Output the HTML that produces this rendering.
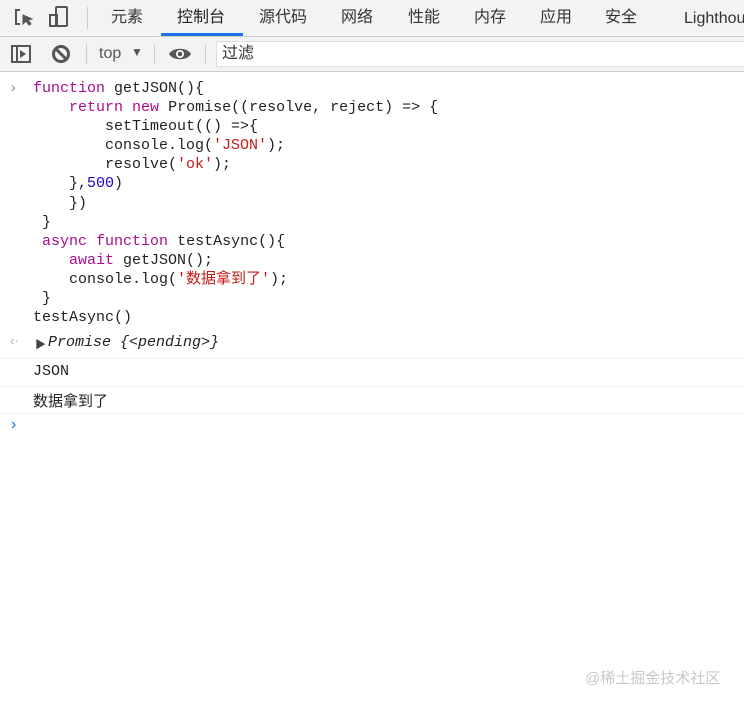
<!DOCTYPE html>
<html><head><meta charset="utf-8"><style>
body{margin:0;width:744px;height:706px;background:#fff;overflow:hidden;position:relative;font-family:"Liberation Sans","Noto Sans CJK SC",sans-serif;}
.tabs{position:absolute;left:0;top:0;width:744px;height:36px;background:#f1f3f4;border-bottom:1px solid #cbcdd1;overflow:hidden;}
.tab{position:absolute;top:7px;font-size:16px;line-height:22px;color:#333;white-space:nowrap;}
.ul{position:absolute;left:161px;top:33px;width:82px;height:3px;background:#1a73e8;}
.tb{position:absolute;left:0;top:37px;width:744px;height:34px;background:#f1f3f4;border-bottom:1px solid #cbcdd1;}
.sep{position:absolute;width:1px;background:#ccc;}
.filter{position:absolute;left:216px;top:41px;width:540px;height:26px;background:#fff;border:1px solid #ddd;box-sizing:border-box;font-size:16px;color:#333;padding-left:5px;line-height:24px;}
pre{margin:0;position:absolute;left:33px;top:79px;font-family:"Liberation Mono","Noto Sans CJK SC",monospace;font-size:15px;line-height:19.1px;color:#222;}
.k{color:#aa0d91}.s{color:#c41a16}.n{color:#1c00cf}
.row{position:absolute;left:0;width:744px;border-top:1px solid #eee;}
.mono{font-family:"Liberation Mono","Noto Sans CJK SC",monospace;font-size:15px;color:#222;position:absolute;}
</style></head><body>
<div class="tabs">
<svg style="position:absolute;left:13px;top:7px" width="22" height="22" viewBox="0 0 22 22" fill="none" stroke="#555" stroke-width="2"><path d="M7 3H3v14h4"/><path d="M10 8l9 4-4 1 3 4-2 1-3-4-3 3z" fill="#555" stroke-width="1"/></svg>
<svg style="position:absolute;left:48px;top:6px" width="22" height="22" viewBox="0 0 22 22" fill="none" stroke="#555" stroke-width="2"><rect x="8" y="1" width="11" height="19" rx="1"/><rect x="2" y="9" width="7" height="11"/></svg>
<div class="sep" style="left:87px;top:7px;height:22px"></div>
<span class="tab" style="left:111px">元素</span>
<span class="tab" style="left:177px;color:#222">控制台</span>
<span class="tab" style="left:259px">源代码</span>
<span class="tab" style="left:341px">网络</span>
<span class="tab" style="left:408px">性能</span>
<span class="tab" style="left:474px">内存</span>
<span class="tab" style="left:540px">应用</span>
<span class="tab" style="left:605px">安全</span>
<span class="tab" style="left:684px;top:8px">Lighthouse</span>
<div class="ul"></div>
</div>
<div class="tb">
<svg style="position:absolute;left:10px;top:7px" width="22" height="20" viewBox="0 0 22 20" fill="none" stroke="#555" stroke-width="2"><rect x="2" y="2" width="18" height="16"/><path d="M7 2v16"/><path d="M10 6l6 4-6 4z" fill="#555" stroke="none"/></svg>
<svg style="position:absolute;left:51px;top:7px" width="20" height="20" viewBox="0 0 20 20" fill="none" stroke="#555" stroke-width="3"><circle cx="10" cy="10" r="7.5"/><path d="M5 5l10 10"/></svg>
<div class="sep" style="left:86px;top:7px;height:20px"></div>
<span style="position:absolute;left:99px;top:8px;font-size:16px;color:#555">top</span>
<span style="position:absolute;left:131px;top:8px;font-size:12px;color:#555">▼</span>
<div class="sep" style="left:154px;top:7px;height:20px"></div>
<svg style="position:absolute;left:168px;top:9px" width="24" height="16" viewBox="0 0 24 16"><path d="M1 8C5 1 19 1 23 8C19 15 5 15 1 8z" fill="#555"/><circle cx="12" cy="8" r="4" fill="#fff"/><circle cx="12" cy="8" r="2.3" fill="#555"/></svg>
<div class="sep" style="left:205px;top:7px;height:20px"></div>
</div>
<div class="filter">过滤</div>
<span style="position:absolute;left:11px;top:79px;color:#888;font-size:14px">›</span>
<pre><span class="k">function</span> getJSON(){
    <span class="k">return</span> <span class="k">new</span> Promise((resolve, reject) =&gt; {
        setTimeout(() =&gt;{
        console.log(<span class="s">'JSON'</span>);
        resolve(<span class="s">'ok'</span>);
    },<span class="n">500</span>)
    })
 }
 <span class="k">async</span> <span class="k">function</span> testAsync(){
    <span class="k">await</span> getJSON();
    console.log(<span class="s">'数据拿到了'</span>);
 }
testAsync()</pre>
<span style="position:absolute;left:10px;top:333px;color:#aaa;font-size:13px">‹·</span>
<span style="position:absolute;left:35px;top:336px;color:#444;font-size:11px">▶</span>
<span class="mono" style="left:48px;top:334px;font-style:italic">Promise {&lt;pending&gt;}</span>
<div class="row" style="top:358px"></div>
<span class="mono" style="left:33px;top:363px">JSON</span>
<div class="row" style="top:386px"></div>
<span class="mono" style="left:33px;top:390px">数据拿到了</span>
<div class="row" style="top:413px"></div>
<span style="position:absolute;left:11px;top:416px;color:#1a73e8;font-size:16px">›</span>
<span style="position:absolute;left:585px;top:667px;color:#c8c8c8;font-size:15px">@稀土掘金技术社区</span>
</body></html>
